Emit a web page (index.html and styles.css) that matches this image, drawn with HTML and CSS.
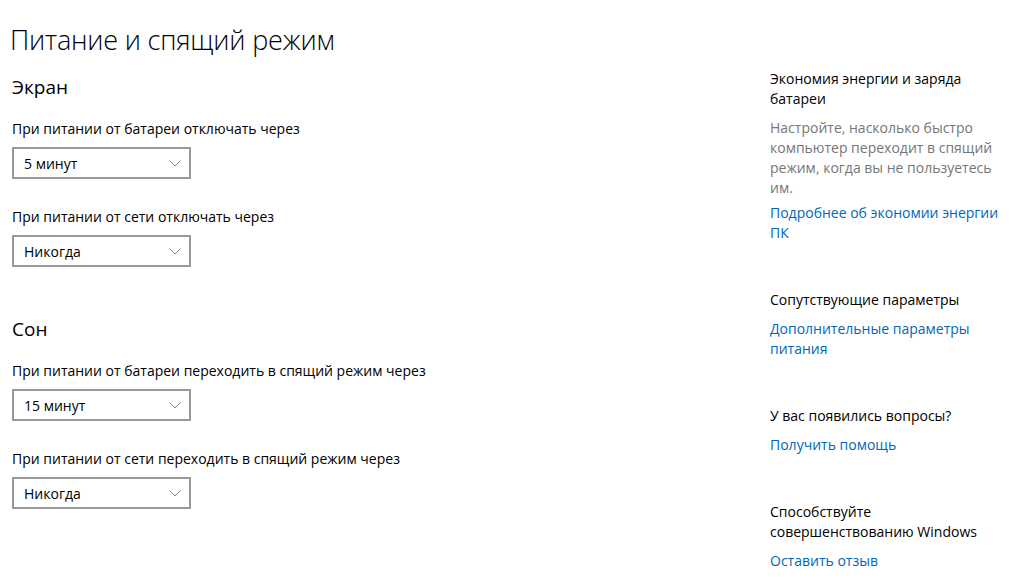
FILE: index.html
```html
<!DOCTYPE html>
<html lang="ru">
<head>
<meta charset="utf-8">
<title>Питание и спящий режим</title>
<link rel="stylesheet" href="styles.css">
</head>
<body>
<div class="page">
  <main class="main">
    <h1 class="title">Питание и спящий режим</h1>

    <section class="group">
      <h2 class="group-title">Экран</h2>
      <div class="field">
        <div class="label">При питании от батареи отключать через</div>
        <div class="select"><span>5 минут</span><svg class="chev" viewBox="0 0 12 7" width="12" height="7"><path d="M0.5 0.5 L6 6 L11.5 0.5" fill="none" stroke="#8a8a8a" stroke-width="1"/></svg></div>
      </div>
      <div class="field">
        <div class="label">При питании от сети отключать через</div>
        <div class="select"><span>Никогда</span><svg class="chev" viewBox="0 0 12 7" width="12" height="7"><path d="M0.5 0.5 L6 6 L11.5 0.5" fill="none" stroke="#8a8a8a" stroke-width="1"/></svg></div>
      </div>
    </section>

    <section class="group group-sleep">
      <h2 class="group-title">Сон</h2>
      <div class="field">
        <div class="label">При питании от батареи переходить в спящий режим через</div>
        <div class="select"><span>15 минут</span><svg class="chev" viewBox="0 0 12 7" width="12" height="7"><path d="M0.5 0.5 L6 6 L11.5 0.5" fill="none" stroke="#8a8a8a" stroke-width="1"/></svg></div>
      </div>
      <div class="field">
        <div class="label">При питании от сети переходить в спящий режим через</div>
        <div class="select"><span>Никогда</span><svg class="chev" viewBox="0 0 12 7" width="12" height="7"><path d="M0.5 0.5 L6 6 L11.5 0.5" fill="none" stroke="#8a8a8a" stroke-width="1"/></svg></div>
      </div>
    </section>
  </main>

  <aside class="side">
    <div class="block">
      <div class="side-title">Экономия энергии и заряда<br>батареи</div>
      <div class="side-desc">Настройте, насколько быстро<br>компьютер переходит в спящий<br>режим, когда вы не пользуетесь<br>им.</div>
      <a class="link">Подробнее об экономии энергии<br>ПК</a>
    </div>
    <div class="block">
      <div class="side-title">Сопутствующие параметры</div>
      <a class="link">Дополнительные параметры<br>питания</a>
    </div>
    <div class="block">
      <div class="side-title">У вас появились вопросы?</div>
      <a class="link">Получить помощь</a>
    </div>
    <div class="block">
      <div class="side-title">Способствуйте<br>совершенствованию Windows</div>
      <a class="link">Оставить отзыв</a>
    </div>
  </aside>
</div>
</body>
</html>
```

FILE: styles.css
```css
* { box-sizing: border-box; }

html, body {
  margin: 0;
  padding: 0;
  background: #ffffff;
}

body {
  font-family: "Open Sans", "Noto Sans", "Liberation Sans", sans-serif;
  color: #000000;
  font-size: 14px;
}

.page {
  display: flex;
  width: 1018px;
  height: 587px;
  overflow: hidden;
}

.main {
  width: 770px;
  padding-left: 12px;
  padding-top: 22px;
}

.title {
  margin: 0 0 0 -2px;
  font-size: 27px;
  font-weight: 300;
  line-height: 36px;
  letter-spacing: -0.2px;
}

.group-title {
  margin: 0;
  font-size: 19px;
  font-weight: 400;
  line-height: 26px;
}

.group {
  margin-top: 16px;
}

.group-sleep {
  margin-top: 49px;
}

.field {
  margin-top: 19px;
}

.field + .field {
  margin-top: 28px;
}

.label {
  font-size: 14px;
  line-height: 20px;
}

.select {
  margin-top: 8px;
  width: 179px;
  height: 32px;
  border: 2px solid #999999;
  display: flex;
  align-items: center;
  justify-content: space-between;
  padding: 0 8px 0 10px;
  font-size: 14px;
}

.chev {
  display: block;
}

.side {
  width: 248px;
  padding-top: 69px;
  display: flex;
  flex-direction: column;
  gap: 47px;
}

.block {
  display: flex;
  flex-direction: column;
}

.side-title {
  font-size: 14px;
  line-height: 20px;
  margin-bottom: 9px;
}

.side-desc {
  font-size: 14px;
  line-height: 20px;
  color: #767676;
  margin-bottom: 5px;
}

.link {
  font-size: 14px;
  line-height: 20px;
  color: #0067b8;
  text-decoration: none;
}
```
